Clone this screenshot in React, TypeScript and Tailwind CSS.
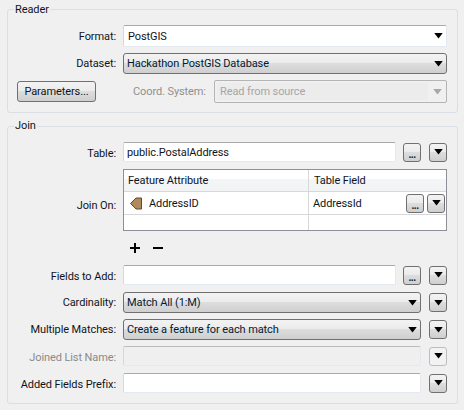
import React from "react";

const grad = "bg-[linear-gradient(to_bottom,#f3f3f3_0%,#ebebeb_48%,#dddddd_50%,#cfcfcf_100%)]";

function Arrow({ color = "#000" }: { color?: string }) {
  return (
    <svg width="9" height="6" viewBox="0 0 9 6" className="block">
      <path d="M1 0h7v1H8L4.5 5.5 1 1H1z" fill={color} />
      <path d="M0 0h9v1H0z" fill={color} opacity="0.35" />
    </svg>
  );
}

function Field({ text = "", w, disabled = false }: { text?: string; w: string; disabled?: boolean }) {
  return (
    <div
      className={`${w} h-[20px] flex items-center pl-[3px] pt-[3px] border border-[#e3e9ef] border-t-[#a9a9a9] border-l-[#d5d9de] rounded-[2px] ${disabled ? "bg-[#efefef] border-[#c4c4c4] border-t-[#bbbbbb]" : "bg-white"}`}
    >
      {text}
    </div>
  );
}

function Combo({ text, w }: { text: string; w: string }) {
  return (
    <div className={`${w} h-[21px] flex items-center justify-between pl-[3px] pr-[3px] border border-[#707070] rounded-[3px] ${grad} text-[#001a33]`}>
      <span className="pt-[2px]">{text}</span>
      <Arrow />
    </div>
  );
}

function SmallBtn({ kind, disabled = false }: { kind: "dots" | "arrow"; disabled?: boolean }) {
  return (
    <div
      className={`w-[18px] h-[19px] shrink-0 flex items-center justify-center rounded-[3px] border ${disabled ? "border-[#bdbdbd] bg-[#f2f2f2]" : `border-[#707070] ${grad}`}`}
    >
      {kind === "arrow" ? <Arrow /> : <span className="leading-none font-bold text-[#001a33] mt-[5px] tracking-[-0.5px] text-[10px]">...</span>}
    </div>
  );
}

function Label({ children, muted = false, tall = false }: { children: React.ReactNode; muted?: boolean; tall?: boolean }) {
  return <div className={`w-[108px] shrink-0 ${tall ? "pt-[2px]" : "pt-[4px]"} text-right whitespace-nowrap ${muted ? "text-[#8a8a8a]" : ""}`}>{children}</div>;
}

function Row({ label, muted, children, tall = false }: { label: string; muted?: boolean; children: React.ReactNode; tall?: boolean }) {
  return (
    <div className={`flex items-center gap-[7px] ${tall ? "h-[21px]" : "h-[20px]"}`}>
      <Label muted={muted} tall={tall}>
        {label}
      </Label>
      {children}
    </div>
  );
}

function Group({ title, titleClass, className, children }: { title: string; titleClass: string; className: string; children: React.ReactNode }) {
  return (
    <div className={`relative border border-[#d9dfe4] rounded-[3px] ${className}`}>
      <span className={`absolute left-[6px] px-[1px] bg-[#f0f0f0] leading-[13px] ${titleClass}`}>{title}</span>
      {children}
    </div>
  );
}

export default function App() {
  return (
    <div
      className="w-[464px] h-[410px] overflow-hidden bg-[#f0f0f0] text-[#10141a] text-[11px] tracking-[-0.1px] px-[7px] pt-[9px]"
      style={{ fontFamily: "Roboto, sans-serif" }}
    >
      <Group title="Reader" titleClass="top-[-7px]" className="w-[451px] h-[104px] pt-[15px]">
        <div className="flex items-center gap-[7px] h-[22px]">
          <Label tall>Format:</Label>
          <div className="w-[324px] h-[22px] flex items-center justify-between pl-[4px] pr-[3px] bg-white border border-[#e3e9ef] border-t-[#a9a9a9] border-l-[#d5d9de] rounded-[2px]">
            <span className="pt-[2px]">PostGIS</span>
            <Arrow />
          </div>
        </div>
        <div className="mt-[6px]">
          <Row label="Dataset:" tall>
            <Combo text="Hackathon PostGIS Database" w="w-[324px]" />
          </Row>
        </div>
        <div className="mt-[6px] flex items-center h-[23px] pl-[9px]">
          <div className={`w-[79px] h-[21px] pt-[1px] flex items-center justify-center border border-[#707070] rounded-[3px] ${grad}`}>Parameters...</div>
          <span className="ml-[37px] w-[74px] pt-[1px] text-[#8f8f8f] whitespace-nowrap">Coord. System:</span>
          <div className="ml-[7px] w-[233px] h-[23px] border border-[#b5b5b5] rounded-[2px] flex items-center p-[2px] pr-0 bg-[#f0f0f0]">
            <div className="flex-1 h-full bg-[#ececec] pl-[3px] pt-[1px] flex items-center text-[#a6a6a6]">Read from source</div>
            <div className="w-[18px] flex justify-center">
              <Arrow color="#a8a8a8" />
            </div>
          </div>
        </div>
      </Group>

      <Group title="Join" titleClass="top-[-8px]" className="mt-[13px] w-[451px] h-[278px] pt-[15px]">
        <Row label="Table:">
          <Field text="public.PostalAddress" w="w-[273px]" />
          <SmallBtn kind="dots" />
          <div className="ml-[1px]">
            <SmallBtn kind="arrow" />
          </div>
        </Row>

        <div className="mt-[7px] flex items-center gap-[7px] h-[62px]">
          <div className="pt-[11px]">
            <Label tall>Join On:</Label>
          </div>
          <div className="w-[324px] h-[62px] border border-[#8f8f98] bg-white flex flex-col">
            <div className="h-[22px] shrink-0 flex bg-[linear-gradient(to_bottom,#ffffff_0%,#ffffff_40%,#f4f5f7_45%,#f2f3f5_100%)] border-b border-[#d8d8d8]">
              <div className="w-[185px] pl-[4px] pt-[2px] flex items-center border-r border-[#d8d8d8]">Feature Attribute</div>
              <div className="flex-1 pl-[5px] pt-[2px] flex items-center">Table Field</div>
            </div>
            <div className="h-[23px] shrink-0 flex border-b border-[#d8d8d8]">
              <div className="w-[185px] flex items-center pl-[6px] border-r border-[#d8d8d8]">
                <svg width="12" height="13" viewBox="0 0 12 13" className="block shrink-0">
                  <path d="M0.5 6.5 L6 1 H11.5 V12 H6 Z" fill="#b08a58" stroke="#5f4a2c" strokeWidth="1" />
                </svg>
                <span className="ml-[7px] pt-[2px]">AddressID</span>
              </div>
              <div className="flex-1 pl-[4px] flex items-center justify-between pr-[1px]">
                <span className="pt-[2px]">AddressId</span>
                <div className="flex gap-[3px]">
                  <SmallBtn kind="dots" />
                  <SmallBtn kind="arrow" />
                </div>
              </div>
            </div>
            <div className="flex-1 flex">
              <div className="w-[185px] border-r border-[#d8d8d8]" />
            </div>
          </div>
        </div>

        <div className="mt-[11px] ml-[122px] h-[12px] flex items-center gap-[13px]">
          <svg width="10" height="10" viewBox="0 0 10 10" className="block">
            <path d="M4 0h2v4h4v2H6v4H4V6H0V4h4z" fill="#000" />
          </svg>
          <svg width="10" height="10" viewBox="0 0 10 10" className="block">
            <path d="M0 4h10v2H0z" fill="#000" />
          </svg>
        </div>

        <div className="mt-[11px]">
          <Row label="Fields to Add:">
            <Field w="w-[273px]" />
            <SmallBtn kind="dots" />
            <div className="ml-[1px]">
              <SmallBtn kind="arrow" />
            </div>
          </Row>
        </div>
        <div className="mt-[7px]">
          <Row label="Cardinality:" tall>
            <Combo text="Match All (1:M)" w="w-[298px]" />
            <div className="ml-[1px]">
              <SmallBtn kind="arrow" />
            </div>
          </Row>
        </div>
        <div className="mt-[6px]">
          <Row label="Multiple Matches:" tall>
            <Combo text="Create a feature for each match" w="w-[298px]" />
            <div className="ml-[1px]">
              <SmallBtn kind="arrow" />
            </div>
          </Row>
        </div>
        <div className="mt-[6px]">
          <Row label="Joined List Name:" muted>
            <Field w="w-[298px]" disabled />
            <div className="ml-[1px]">
              <SmallBtn kind="arrow" disabled />
            </div>
          </Row>
        </div>
        <div className="mt-[7px]">
          <Row label="Added Fields Prefix:">
            <Field w="w-[298px]" />
            <div className="ml-[1px]">
              <SmallBtn kind="arrow" />
            </div>
          </Row>
        </div>
      </Group>
    </div>
  );
}
